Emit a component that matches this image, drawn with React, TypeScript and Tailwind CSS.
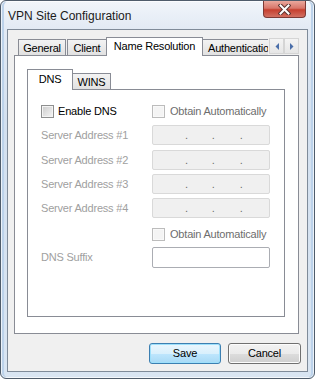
import React from 'react'

const font = "font-['Liberation_Sans',Arial,sans-serif] tracking-[-0.2px]"

function Checkbox({ disabled }: { disabled?: boolean }) {
  return (
    <div
      className={`w-[13px] h-[13px] shrink-0 border ${
        disabled ? 'border-[#bcbcbc] bg-[#f4f4f4]' : 'border-[#8e8f8f] bg-[linear-gradient(135deg,#cbcbcb,#f6f6f6)]'
      }`}
    >
      <div className={`w-full h-full border ${disabled ? 'border-[#f9f9f9]' : 'border-[#f4f4f4]'}`} />
    </div>
  )
}

function IpBox() {
  return (
    <div className="w-[118px] h-[20px] border border-[#d9d9d9] rounded-[2px] bg-[#f0f0f0] flex items-center pl-px text-[11px] leading-none text-[#6d6d6d]">
      <span className="ml-[31px]">.</span>
      <span className="ml-[24px]">.</span>
      <span className="ml-[25px]">.</span>
    </div>
  )
}

function Label({ children }: { children: React.ReactNode }) {
  return <div className="h-[20px] flex items-center whitespace-nowrap text-[11px] text-[#a0a0a0]">{children}</div>
}

export default function App() {
  return (
    <div
      className={`${font} w-[315px] h-[379px] border border-[#4f5c6b] rounded-[6px] bg-[linear-gradient(to_bottom,#f1f5fa_0px,#e2eaf4_28px,#d3e0ef_120px,#d9e5f2_100%)] shadow-[inset_0_0_0_1px_rgba(255,255,255,0.7),inset_3px_0_0_#bcd2ea,inset_-3px_0_0_#bcd2ea] flex flex-col overflow-hidden`}
    >
      {/* Title bar */}
      <div className="h-[28px] flex items-start justify-between">
        <div className="pl-[7px] pt-[8px] text-[12px] leading-[14px] tracking-normal text-[#1b1b1b]">VPN Site Configuration</div>
        <div className="mr-[8px] w-[43px] h-[17px] rounded-b-[4px] border border-t-0 border-[#7d3a35] bg-[linear-gradient(to_bottom,#eaa89d_0%,#d8766a_45%,#c6402f_55%,#d27062_100%)] flex items-center justify-center">
          <svg width="13" height="11" viewBox="0 0 13 11">
            <path d="M2.5 1.5 L10.5 9.5 M10.5 1.5 L2.5 9.5" stroke="#5a3330" strokeWidth="4" strokeLinecap="square" />
            <path d="M2.5 1.5 L10.5 9.5 M10.5 1.5 L2.5 9.5" stroke="#ffffff" strokeWidth="2" strokeLinecap="square" />
          </svg>
        </div>
      </div>

      {/* Client area */}
      <div className="mx-[6px] w-[301px] h-[343px] border border-[#7f8b99] bg-[#f0f0f0] flex flex-col">
        <div className="ml-[6px] mt-[7px] w-[285px]">
          {/* outer tabs */}
          <div className="relative z-10 -mb-px flex h-[19px] text-[11px] text-black whitespace-nowrap">
            <div className="w-[254px] h-full flex items-end overflow-hidden">
              <div className="ml-[4px] mb-px w-[48px] h-[16px] shrink-0 border border-b-0 border-[#898c95] bg-[linear-gradient(to_bottom,#f3f3f3,#e1e1e1)] flex items-center justify-center pt-[2px]">
                General
              </div>
              <div className="ml-px mb-px w-[39px] h-[16px] shrink-0 border border-b-0 border-r-0 border-[#898c95] bg-[linear-gradient(to_bottom,#f3f3f3,#e1e1e1)] flex items-center justify-center pt-[2px]">
                Client
              </div>
              <div className="w-[97px] h-[19px] shrink-0 border border-b-0 border-[#898c95] bg-white flex items-center justify-center pb-px">
                Name Resolution
              </div>
              <div className="mb-px w-[90px] h-[16px] shrink-0 border border-b-0 border-l-0 border-[#898c95] bg-[linear-gradient(to_bottom,#f3f3f3,#e1e1e1)] flex items-center pl-[5px] pt-[2px]">
                Authentication
              </div>
            </div>
            <div className="ml-px mt-px flex h-[16px]">
              {['left', 'right'].map((d) => (
                <div
                  key={d}
                  className="w-[15px] h-[16px] border border-[#d5d5d5] bg-[linear-gradient(to_bottom,#f4f4f4,#e6e6e6)] flex items-center justify-center"
                >
                  <svg width="4" height="7" viewBox="0 0 4 7">
                    {d === 'left' ? (
                      <path d="M4 0 L0.5 3.5 L4 7 Z" fill="#4a6ea9" />
                    ) : (
                      <path d="M0 0 L3.5 3.5 L0 7 Z" fill="#4a6ea9" />
                    )}
                  </svg>
                </div>
              ))}
            </div>
          </div>

          {/* outer panel */}
          <div className="w-[285px] h-[279px] border border-[#898c95] bg-white pl-[12px] pt-[13px]">
            {/* inner tabs */}
            <div className="relative z-10 -mb-px flex items-end h-[21px] text-[11px] text-black">
              <div className="w-[46px] h-[21px] border border-b-0 border-[#898c95] bg-white flex items-center justify-center pb-[2px]">
                DNS
              </div>
              <div className="mb-px w-[38px] h-[16px] border border-b-0 border-l-0 border-[#898c95] bg-[linear-gradient(to_bottom,#f3f3f3,#e1e1e1)] flex items-center justify-center pt-[2px]">
                WINS
              </div>
            </div>

            {/* inner panel */}
            <div className="w-[258px] h-[228px] border border-[#898c95] bg-white pl-[13px] pt-[15px]">
              <div className="grid grid-cols-[111px_118px]">
                <div className="flex items-center h-[13px] gap-[4px] whitespace-nowrap text-[11px] text-black">
                  <Checkbox />
                  <span>Enable DNS</span>
                </div>
                <div className="flex items-center h-[13px] gap-[5px] whitespace-nowrap text-[11px] text-[#6d6d6d]">
                  <Checkbox disabled />
                  <span>Obtain Automatically</span>
                </div>

                <div className="mt-[7px]"><Label>Server Address #1</Label></div>
                <div className="mt-[7px]"><IpBox /></div>
                <div className="mt-[5px]"><Label>Server Address #2</Label></div>
                <div className="mt-[5px]"><IpBox /></div>
                <div className="mt-[4px]"><Label>Server Address #3</Label></div>
                <div className="mt-[4px]"><IpBox /></div>
                <div className="mt-[4px]"><Label>Server Address #4</Label></div>
                <div className="mt-[4px]"><IpBox /></div>

                <div className="mt-[10px] h-[13px]" />
                <div className="mt-[10px] flex items-center h-[13px] gap-[5px] whitespace-nowrap text-[11px] text-[#6d6d6d]">
                  <Checkbox disabled />
                  <span>Obtain Automatically</span>
                </div>

                <div className="mt-[6px] h-[21px] flex items-center text-[11px] text-[#a0a0a0]">DNS Suffix</div>
                <div className="mt-[6px] w-[118px] h-[21px] border border-[#abadb3] rounded-[2px] bg-white" />
              </div>
            </div>
          </div>
        </div>

        {/* buttons */}
        <div className="mt-[9px] mr-[6px] flex justify-end gap-[7px] text-[11px] text-black">
          <button className="w-[72px] h-[21px] rounded-[3px] border border-[#3c7fb1] bg-[linear-gradient(to_bottom,#eaf6fd_0%,#d9f0fc_50%,#bee6fd_51%,#a7d9f5_100%)] shadow-[inset_0_0_0_1px_#9ee0fb] flex items-center justify-center">
            Save
          </button>
          <button className="w-[73px] h-[21px] rounded-[3px] border border-[#707070] bg-[linear-gradient(to_bottom,#f2f2f2_0%,#ebebeb_50%,#dddddd_51%,#cfcfcf_100%)] shadow-[inset_0_0_0_1px_#fcfcfc] flex items-center justify-center">
            Cancel
          </button>
        </div>
      </div>
    </div>
  )
}
